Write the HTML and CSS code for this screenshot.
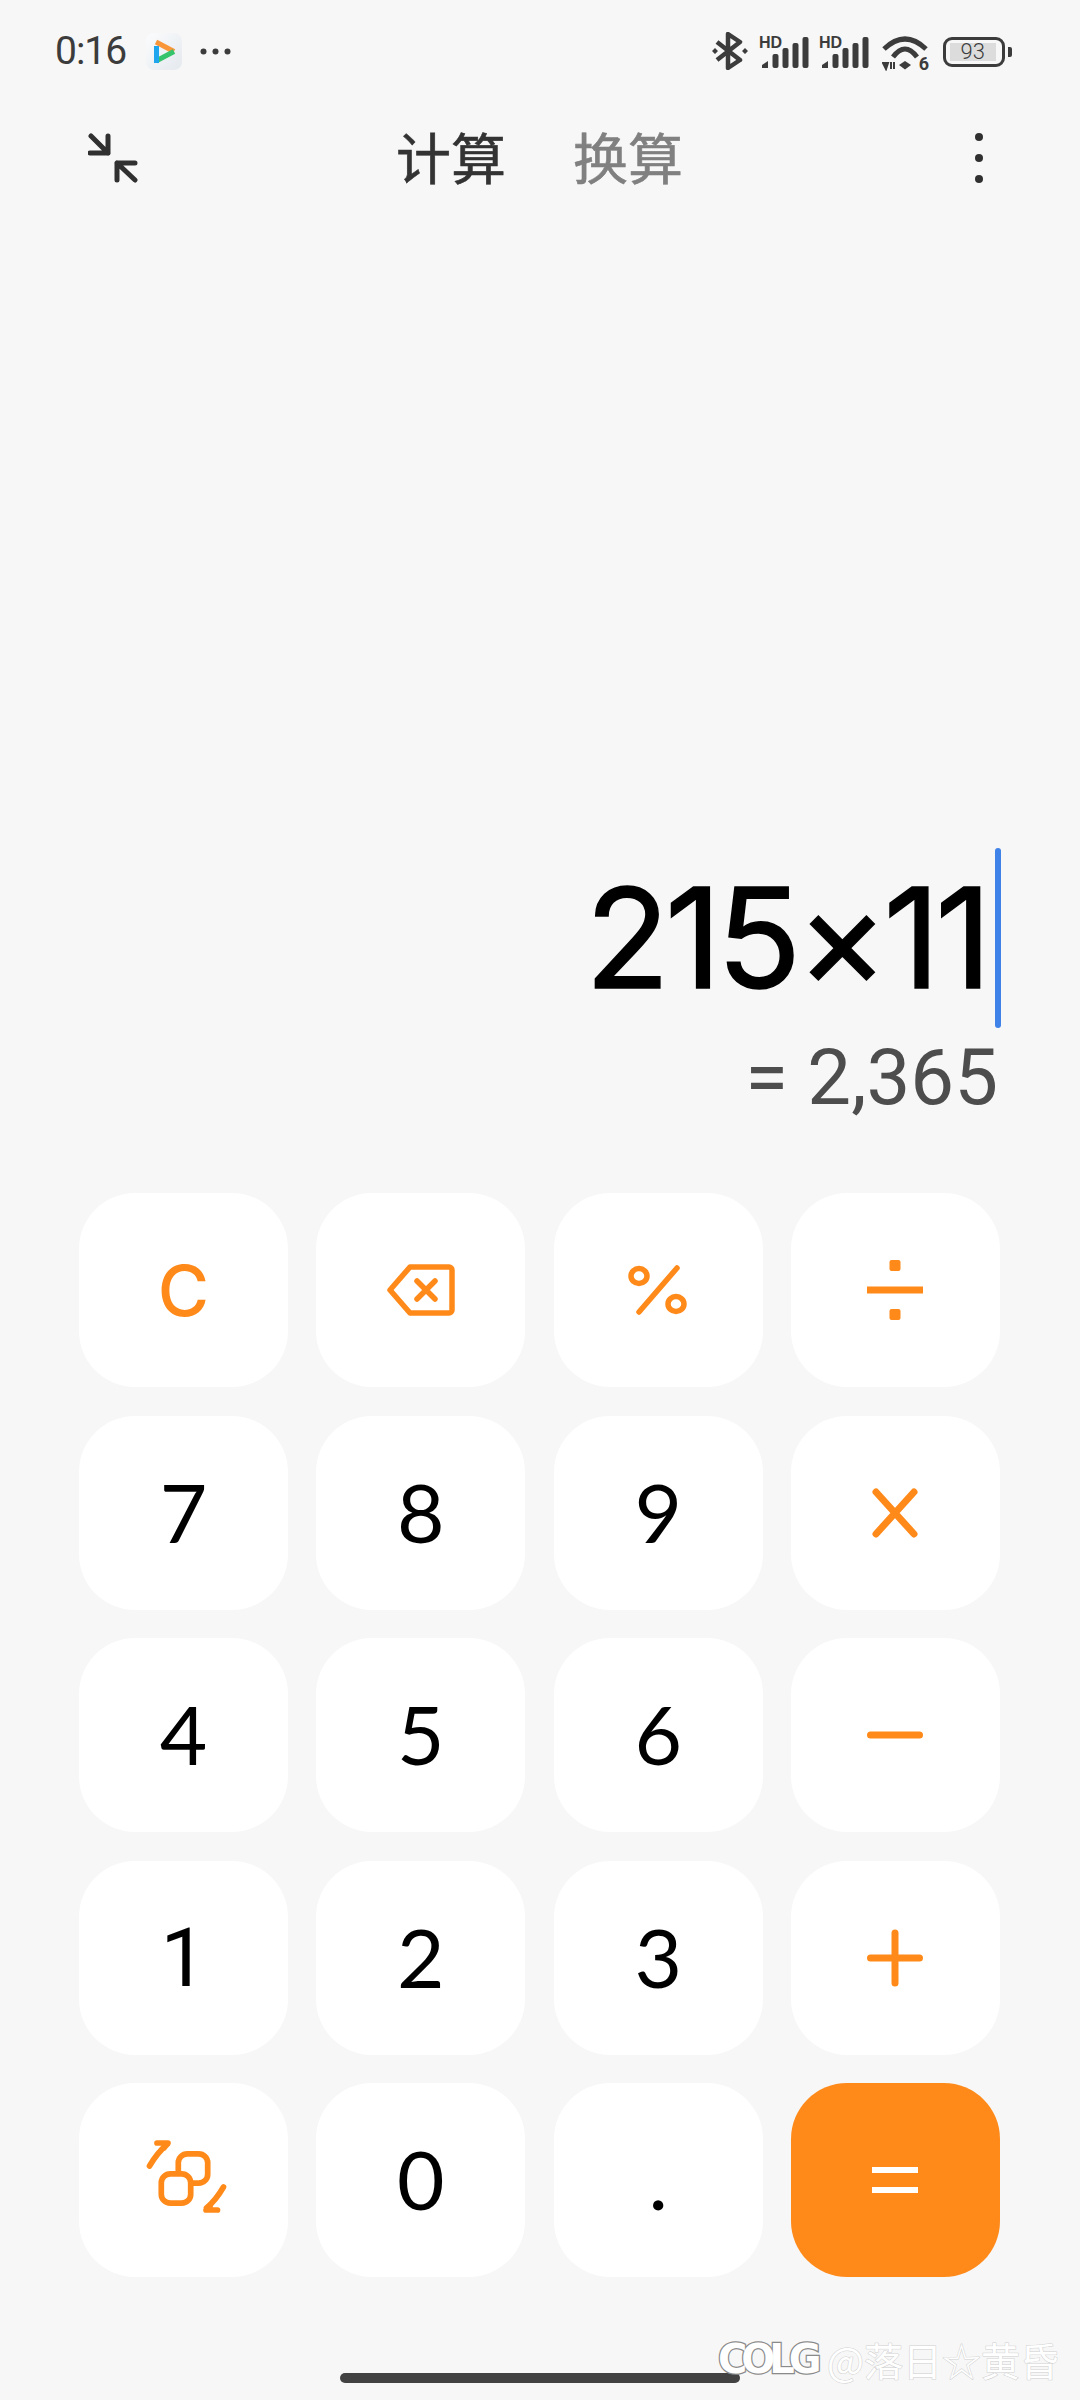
FILE: index.html
```html
<!DOCTYPE html>
<html lang="zh">
<head>
<meta charset="utf-8">
<title>计算器</title>
<link rel="stylesheet" href="styles.css">
</head>
<body>
<div class="screen">
  <header class="status">
    <div class="status-left">
      <span class="time">0:16</span>
      <svg class="app" viewBox="0 0 36 37"><defs><linearGradient id="ag" x1="0" y1="0" x2="1" y2="1"><stop offset="0" stop-color="#fbfcfd"/><stop offset="1" stop-color="#e4e9ee"/></linearGradient></defs><rect width="36" height="37" rx="8" fill="url(#ag)"/><path d="M10 9 L28 18.500" stroke="#f9963a" stroke-width="5" fill="none"/><path d="M10 28 L28 18.500" stroke="#35c46c" stroke-width="5" fill="none"/><path d="M10.500 13 V30" stroke="#1fa5ee" stroke-width="5" fill="none"/></svg>
      <svg class="more" viewBox="0 0 31 7"><circle cx="3.500" cy="3.500" r="3" /><circle cx="15.500" cy="3.500" r="3"/><circle cx="27.500" cy="3.500" r="3"/></svg>
    </div>
    <div class="status-right">
      <svg class="bt" viewBox="0 0 36 38"><path d="M5 10 L28 28 L16 36 V2 L28 10 L5 28" fill="none" stroke="#3c3c3c" stroke-width="4.500" stroke-linejoin="round"/><path d="M0 19 l3 -3 l3 3 l-3 3z M30 19 l3 -3 l3 3 l-3 3z" fill="#3c3c3c"/></svg>
      <div class="signal"><span class="hd">HD</span><svg viewBox="0 0 50 31"><path d="M3 28 L9 24 V31 H3Z"/><rect x="13.500" y="17" width="6" height="14" rx="2"/><rect x="23.500" y="11" width="6" height="20" rx="2"/><rect x="33.500" y="6" width="6" height="25" rx="2"/><rect x="43.500" y="0" width="6" height="31" rx="2"/></svg></div>
      <div class="signal"><span class="hd">HD</span><svg viewBox="0 0 50 31"><path d="M3 28 L9 24 V31 H3Z"/><rect x="13.500" y="17" width="6" height="14" rx="2"/><rect x="23.500" y="11" width="6" height="20" rx="2"/><rect x="33.500" y="6" width="6" height="25" rx="2"/><rect x="43.500" y="0" width="6" height="31" rx="2"/></svg></div>
      <div class="wifi"><svg viewBox="0 0 47 36"><path d="M2 14 Q23 -6 44 14" fill="none" stroke="#3c3c3c" stroke-width="5"/><path d="M11 22 Q23 6 35 22" fill="none" stroke="#3c3c3c" stroke-width="5"/><path d="M17 30 L23 26 L29 30 L23 34.500Z" fill="#3c3c3c"/><path d="M1 28 L4 34 L6 28Z M9 34 V27 M12 34 V27" fill="#3c3c3c" stroke="#3c3c3c" stroke-width="2"/></svg><span class="wifi-six">6</span></div>
      <div class="battery"><div class="battery-body"><span class="battery-fill">93</span></div><span class="battery-cap"></span></div>
    </div>
  </header>

  <nav class="toolbar">
    <svg class="shrink" viewBox="0 0 50 50"><path d="M3 3 L20 20 M20 3 V20 H2 M47 47 L29 30 M29 47 V30 H47" fill="none" stroke="#303030" stroke-width="5" stroke-linecap="round" stroke-linejoin="round"/></svg>
    <div class="tabs"><span class="tab tab-on">计算</span><span class="tab tab-off">换算</span></div>
    <svg class="kebab" viewBox="0 0 8 50"><circle cx="4" cy="4" r="4"/><circle cx="4" cy="25" r="4"/><circle cx="4" cy="46" r="4"/></svg>
  </nav>

  <section class="display">
    <div class="expr"><span class="expr-text">215×11</span><span class="caret"></span></div>
    <div class="result">= 2,365</div>
  </section>

  <main class="keys">
    <button class="key op-text">C</button>
    <button class="key"><svg class="ic-back" viewBox="0 0 68 52"><path d="M23 3 H62 a3 3 0 0 1 3 3 V46 a3 3 0 0 1 -3 3 H23 L3 26Z" fill="none" stroke="#ff8a1a" stroke-width="5.500" stroke-linejoin="round"/><path d="M30 17 L48 35 M48 17 L30 35" stroke="#ff8a1a" stroke-width="5.500" stroke-linecap="round"/></svg></button>
    <button class="key"><svg class="ic-pct" viewBox="0 0 60 50"><ellipse cx="11" cy="11" rx="8" ry="7.500" fill="none" stroke="#ff8a1a" stroke-width="5.500"/><ellipse cx="48" cy="39" rx="8" ry="7.500" fill="none" stroke="#ff8a1a" stroke-width="5.500"/><path d="M49 3 L11 47" stroke="#ff8a1a" stroke-width="5.500" stroke-linecap="round"/></svg></button>
    <button class="key"><svg class="ic-op" viewBox="0 0 58 60"><path d="M1 30 H57" stroke="#ff8a1a" stroke-width="7"/><rect x="23.500" y="0" width="11" height="11" rx="2" fill="#ff8a1a"/><rect x="23.500" y="49" width="11" height="11" rx="2" fill="#ff8a1a"/></svg></button>

    <button class="key num">7</button>
    <button class="key num">8</button>
    <button class="key num">9</button>
    <button class="key"><svg class="ic-op" viewBox="0 0 58 60"><path d="M10 9 L48 51 M48 9 L10 51" stroke="#ff8a1a" stroke-width="7" stroke-linecap="round" fill="none"/></svg></button>

    <button class="key num">4</button>
    <button class="key num">5</button>
    <button class="key num">6</button>
    <button class="key"><svg class="ic-op" viewBox="0 0 58 60"><path d="M4.500 30 H53.500" stroke="#ff8a1a" stroke-width="7" stroke-linecap="round"/></svg></button>

    <button class="key num num-one">1</button>
    <button class="key num">2</button>
    <button class="key num">3</button>
    <button class="key"><svg class="ic-op" viewBox="0 0 58 60"><path d="M4.500 30 H53.500 M29 5 V55" stroke="#ff8a1a" stroke-width="7" stroke-linecap="round" fill="none"/></svg></button>

    <button class="key"><svg class="ic-swap" viewBox="0 0 90 90"><rect x="39.300" y="18.800" width="29.400" height="29.400" rx="9" fill="none" stroke="#ff8a1a" stroke-width="5.700"/><rect x="22.300" y="38.800" width="29.400" height="29.400" rx="9" fill="#fff" stroke="#ff8a1a" stroke-width="5.700"/><path d="M10.500 31 Q18 18 28.500 9 M18 8 H29 L25 13" fill="none" stroke="#ff8a1a" stroke-width="5.700" stroke-linecap="round" stroke-linejoin="round"/><path d="M84.500 52 Q77 65 67.500 73 M78.500 75 H67 L71 71" fill="none" stroke="#ff8a1a" stroke-width="5.700" stroke-linecap="round" stroke-linejoin="round"/></svg></button>
    <button class="key num">0</button>
    <button class="key num dot">.</button>
    <button class="key key-eq"><svg class="ic-eq" viewBox="0 0 46 30"><path d="M0 5 H46 M0 25 H46" stroke="#fff" stroke-width="6"/></svg></button>
  </main>

  <div class="home-bar"></div>
  <div class="watermark"><span class="wm-logo">COLG</span><span class="wm-user">@落日☆黄昏</span></div>
</div>
</body>
</html>
```
FILE: styles.css
```css
* { box-sizing: border-box; }
html, body { margin: 0; padding: 0; }
body { background: #f7f7f7; font-family: Roboto, "Noto Sans CJK SC", sans-serif; }
.screen { position: relative; width: 1080px; height: 2400px; overflow: hidden; background: #f7f7f7; display: flex; flex-direction: column; }

.status { height: 104px; padding: 30px 68px 0 55px; display: flex; justify-content: space-between; align-items: flex-start; color: #3c3c3c; flex: none; }
.status-left { display: flex; align-items: center; height: 42px; }
.time { font-size: 39px; line-height: 42px; width: 91px; letter-spacing: -1px; font-family: Roboto, sans-serif; flex: none; }
.app { width: 36px; height: 37px; }
.more { width: 31px; height: 7px; margin-left: 18px; fill: #3c3c3c; }
.status-right { display: flex; align-items: center; height: 42px; }
.bt { width: 36px; height: 38px; }
.signal { position: relative; width: 50px; height: 31px; margin-top: 3px; margin-left: 11px; }
.signal + .signal { margin-left: 10px; }
.signal svg { position: absolute; left: 0; top: 0; width: 50px; height: 31px; fill: #3c3c3c; }
.hd { position: absolute; left: 0; top: -1px; font-size: 16px; line-height: 14px; font-weight: 700; font-family: "Liberation Sans", sans-serif; color: #3c3c3c; }
.wifi { position: relative; width: 47px; height: 36px; margin-left: 13px; margin-top: 3px; }
.wifi svg { width: 47px; height: 36px; display: block; }
.wifi-six { position: absolute; right: 0; bottom: 0; font-size: 18px; line-height: 14px; font-weight: 700; color: #3c3c3c; }
.battery { display: flex; align-items: center; margin-left: 14px; margin-top: 2px; }
.battery-body { width: 62px; height: 30px; border: 3.500px solid #3c3c3c; border-radius: 9px; padding: 3px 6px 3px 3.500px; display: flex; }
.battery-fill { flex: 1; background: #dcdcdc; font-size: 22px; line-height: 17px; text-align: center; color: #3c3c3c; font-weight: 300; }
.battery-cap { width: 4px; height: 10px; background: #3c3c3c; border-radius: 0 2px 2px 0; margin-left: 3px; }

.toolbar { position: relative; height: 108px; flex: none; display: flex; align-items: center; justify-content: space-between; padding: 0 0 0 88px; }
.shrink { width: 50px; height: 50px; }
.tabs { position: absolute; left: 396px; top: -3px; display: flex; gap: 67px; }
.tab { font-family: "Noto Sans CJK SC", sans-serif; font-size: 55px; line-height: 108px; font-weight: 400; -webkit-text-stroke: 0.6px currentColor; }
.tab-on { color: #333; }
.tab-off { color: #808080; }
.kebab { width: 8px; height: 50px; margin-right: 97px; fill: #303030; }

.display { flex: none; height: 981px; display: flex; flex-direction: column; align-items: flex-end; padding: 636px 79px 0 0; }
.expr { display: flex; align-items: center; height: 180px; }
.expr-text { font-size: 139px; line-height: 180px; color: #000; font-family: Inter, sans-serif; font-weight: 400; letter-spacing: -4.800px; -webkit-text-stroke: 1.5px #000; }
.caret { width: 6px; height: 180px; background: #3f82e8; border-radius: 3px; margin-left: 8px; }
.result { font-size: 78px; line-height: 90px; color: #4d4d4d; margin-right: 3px; font-family: Roboto, sans-serif; margin-top: 5px; }

.keys { flex: none; display: grid; grid-template-columns: repeat(4, 209px); grid-auto-rows: 194px; column-gap: 28.333px; row-gap: 28.500px; padding-left: 79px; }
.key { border: 0; padding: 0; margin: 0; background: #fff; border-radius: 56px; display: flex; align-items: center; justify-content: center; font-family: Lato, sans-serif; }
.num { font-size: 82px; color: #000; font-weight: 400; padding-bottom: 4px; }
.num-one { font-family: Roboto, sans-serif; padding-bottom: 0; }
.op-text { font-size: 70px; color: #ff8a1a; font-weight: 500; font-family: Inter, sans-serif; }
.key-eq { background: #ff8a1a; }
.ic-back { width: 68px; height: 52px; }
.ic-pct { width: 60px; height: 50px; }
.ic-op { width: 58px; height: 60px; }
.ic-swap { width: 90px; height: 90px; }
.ic-eq { width: 46px; height: 30px; }

.home-bar { position: absolute; left: 340px; top: 2373px; width: 400px; height: 10px; border-radius: 5px; background: #424242; }
.watermark { position: absolute; left: 718px; top: 2329px; display: flex; align-items: center; height: 60px; color: #fff; }
.wm-logo { font-family: "DejaVu Sans", sans-serif; font-weight: 700; font-size: 40px; width: 109px; color: #fff; letter-spacing: -6px; -webkit-text-stroke: 2.500px #8a8a8a; paint-order: stroke fill; }
.wm-user { font-family: "Noto Sans CJK SC", sans-serif; font-size: 39px; line-height: 50px; color: #fff; -webkit-text-stroke: 1px #cfcfcf; paint-order: stroke fill; }
```
